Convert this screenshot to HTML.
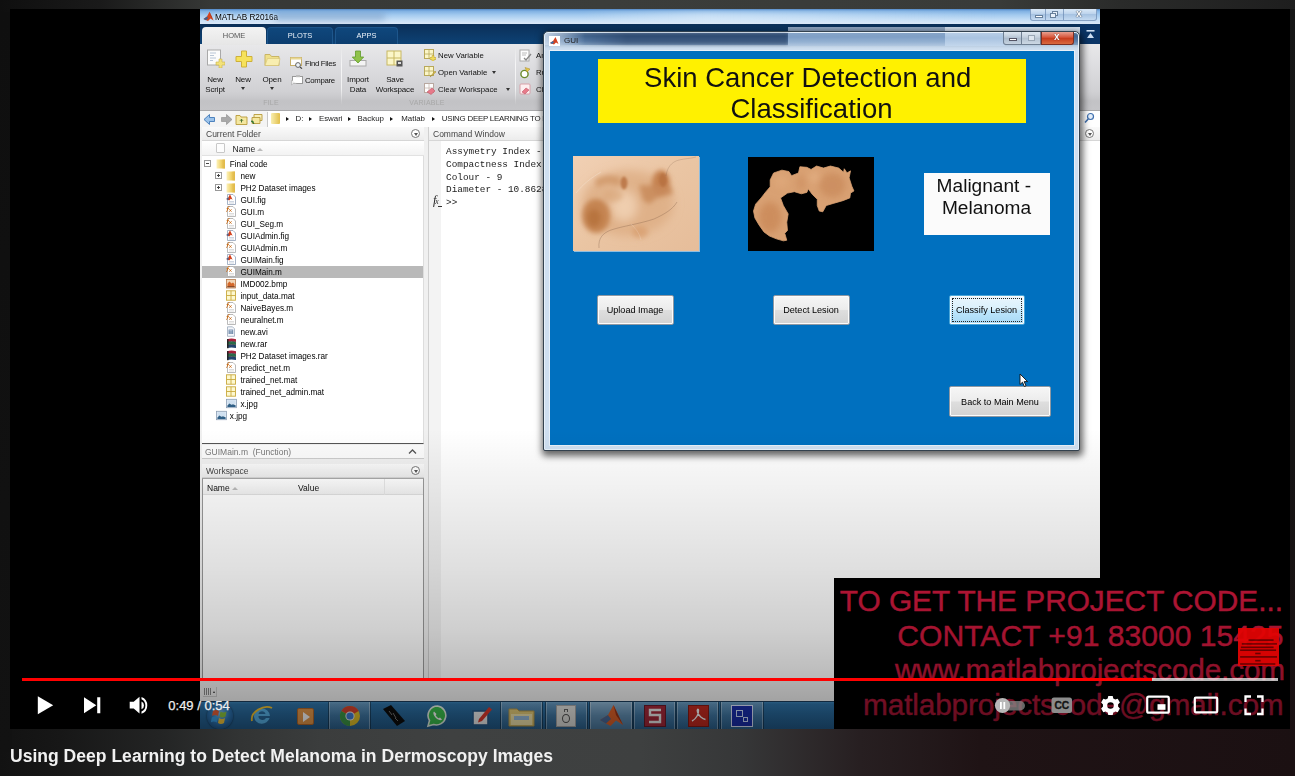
<!DOCTYPE html>
<html>
<head>
<meta charset="utf-8">
<title>Using Deep Learning to Detect Melanoma in Dermoscopy Images</title>
<style>
*{box-sizing:border-box;margin:0;padding:0}
html,body{width:1295px;height:776px;overflow:hidden;background:#161616;font-family:"Liberation Sans",sans-serif;}
#page{position:absolute;left:0;top:0;width:1295px;height:776px;overflow:hidden;
 background:linear-gradient(to right,#121212 0,#171717 60px,#232424 160px,#323434 240px,#3b3d3d 320px,#3f4141 450px,#3e4040 640px,#363738 740px,#271f21 860px,#1f1315 980px,#1b1012 1295px);
}
.abs{position:absolute}
#video{position:absolute;left:10px;top:9px;width:1280px;height:720px;background:#000;overflow:hidden}
#screen{position:absolute;left:190px;top:0;width:900px;height:720px;background:#fff;overflow:hidden;font-size:8px;color:#222;filter:blur(.3px)}
/* everything inside #screen uses coords relative to (200,9) */
#mtitle{left:0;top:0;width:900px;height:15px;background:linear-gradient(to bottom,#4f86c6 0,#7fb0e2 2px,#a3caef 6px,#c6dff6 11px,#dce9f8 15px)}
#mtabs{left:0;top:15px;width:900px;height:20px;background:linear-gradient(to bottom,#0b2f57 0,#0d4275 100%)}
#mtool{left:0;top:35px;width:900px;height:66px;background:linear-gradient(to bottom,#e8e8ea 0,#dcdcdf 25px,#d0d0d3 48px,#c8c8cb 54px,#c2c2c5 57px,#c5c5c8 66px)}
#maddr{left:0;top:101px;width:900px;height:17px;background:#f4f4f4;border-top:1px solid #a9a9ab}

.phead{background:linear-gradient(#fafafa,#ececec);border-bottom:1px solid #d6d6d6;color:#444;font-size:8.5px}
.dd{position:absolute;width:9px;height:9px;border:1px solid #777;border-radius:50%;background:#fff}
.dd:after{content:"";position:absolute;left:1.5px;top:2.5px;border:2px solid transparent;border-bottom:0;border-top:3px solid #555}
#flist .row{position:absolute;left:2px;width:221px;height:12px;font-size:8.200px;color:#000}
#flist .row.sel{background:#b9b9b9}
#flist .row span{position:absolute;top:2px;white-space:nowrap}
#flist i{position:absolute;display:block}
.exp{top:2.200px;width:7px;height:7px;border:1px solid #999;background:#fff}
.exp:before{content:"";position:absolute;left:1px;top:2px;width:3px;height:1px;background:#444}
.exp.plus:after{content:"";position:absolute;left:2px;top:1px;width:1px;height:3px;background:#444}
#flist svg.ic{position:absolute;top:-.300px;overflow:visible}
.mono{font-family:"Liberation Mono",monospace;font-size:9.400px;line-height:12.650px;color:#222;white-space:nowrap}

.btn{background:linear-gradient(#f6f6f6 0,#ececec 48%,#dedede 52%,#d2d2d2 100%);border:1px solid #8e98a3;border-radius:2px;box-shadow:inset 0 0 0 1px #fbfbfb;font-size:9.100px;color:#000;text-align:center;line-height:28px;white-space:nowrap}
.btn.foc{background:linear-gradient(#eaf6fd 0,#d9f0fc 48%,#bee6fd 52%,#a7d9f5 100%);border-color:#49a6d8}
.btn.foc i{position:absolute;left:2px;top:2px;right:2px;bottom:2px;border:1px dotted #222}

.cap{position:absolute;border:1px solid rgba(110,140,180,.75);border-top:0;background:linear-gradient(#d9e8f7,#bcd3ec 45%,#a7c3e2 50%,#c4daf1)}
.tab{height:17px;background:linear-gradient(#0f477c,#0c3d6f);border:1px solid #1d568c;border-bottom:0;border-radius:4px 4px 0 0;text-align:center;font-size:7.500px;line-height:16px;color:#e8f0f8}
.tl{font-size:8px;line-height:10px;color:#111;letter-spacing:-.15px;text-align:center;white-space:nowrap}
.ts{font-size:7.800px;color:#111;white-space:nowrap}
.sec{font-size:7px;color:#a8a8a8;text-align:center;letter-spacing:.2px}
.car{display:inline-block;border:2.500px solid transparent;border-bottom:0;border-top:3px solid #333;vertical-align:2px}
.ra{display:inline-block;border:2.500px solid transparent;border-right:0;border-left:3.500px solid #111;margin:0 6px 0 5px;vertical-align:0}
.tb{height:27px;border:1px solid rgba(255,255,255,.35);border-top:0;border-bottom:0;background:linear-gradient(rgba(255,255,255,.28),rgba(255,255,255,.12) 50%,rgba(255,255,255,.05));box-shadow:-1px 0 0 rgba(0,0,0,.35),1px 0 0 rgba(0,0,0,.35)}

.rt{font-size:29.800px;line-height:34px;color:#cb183c;white-space:nowrap;-webkit-text-stroke:.45px #cb183c}

.ra2{position:absolute;top:107.500px;border:2.600px solid transparent;border-right:0;border-left:3.400px solid #111}
.ad2{position:absolute;top:105px;font-size:7.900px;color:#222;white-space:nowrap}
</style>
</head>
<body>

<svg width="0" height="0" style="position:absolute">
 <defs>
  <linearGradient id="gfold" x1="0" x2="1" y1="0" y2="0"><stop offset="0" stop-color="#fdf3bd"/><stop offset=".55" stop-color="#f0d26a"/><stop offset="1" stop-color="#ddb443"/></linearGradient>
  <symbol id="ic-folder" viewBox="0 0 10 11"><path d="M.5 1.500h8.500v9H.500z" fill="url(#gfold)"/><path d="M6.500 1.500h2.500v9h-2.500z" fill="#e3bd4e" opacity=".6"/></symbol>
  <symbol id="ic-fig" viewBox="0 0 10 11"><path d="M1.500 .5h5.500l2.500 2.500v7.500h-8z" fill="#fff" stroke="#8fa0b8" stroke-width=".8"/><path d="M3 7.500h5M3 9h5" stroke="#b9c4d4" stroke-width=".7"/><path d="M.3 5l2-1.400 1.700-3.400 2.600 5.600-1.800-1-1.600 1.600z" fill="#d4401c"/><path d="M.3 5l2-1.400.8 1.100-1.400 1.200z" fill="#4a6a9a"/></symbol>
  <symbol id="ic-m" viewBox="0 0 10 11"><path d="M1.500 .5h5.500l2.500 2.500v7.500h-8z" fill="#fff" stroke="#a8a8a8" stroke-width=".8"/><path d="M3 7.500h5M3 9h5" stroke="#d0d0d0" stroke-width=".7"/><path d="M.2 5.500c.8 0 1-.4 1.200-1.500l.5-2.300c.2-1 .7-1.400 1.600-1.200" fill="none" stroke="#c86a14" stroke-width=".9"/><path d="M.6 2.600h2.400M3.200 3.200l2.400 2.600M5.600 3.200l-2.400 2.600" stroke="#c86a14" stroke-width=".8"/></symbol>
  <symbol id="ic-mat" viewBox="0 0 10 11"><rect x=".5" y=".8" width="9" height="9.400" fill="#fdf8cf" stroke="#c9a93e" stroke-width=".9"/><path d="M5 .8v9.400M.5 5.500h9" stroke="#c9a93e" stroke-width=".9"/></symbol>
  <symbol id="ic-bmp" viewBox="0 0 10 11"><rect x=".5" y="1.500" width="9" height="8.500" fill="#f1d6b8" stroke="#b5784a" stroke-width=".8"/><path d="M1.500 5.500l2-2 2 2 1.500-1 1.500 1.500v2.500h-7z" fill="#d4682a"/><rect x="1.300" y="8" width="7.400" height="1.300" fill="#8a4a2a"/></symbol>
  <symbol id="ic-avi" viewBox="0 0 10 11"><path d="M1.500 .8h5l2 2v7.500h-7z" fill="#f4f6fa" stroke="#9aa8ba" stroke-width=".8"/><rect x="2.600" y="3.600" width="4.600" height="4.400" fill="#5f7da0"/><path d="M3.300 4.500h3.200M3.300 5.800h3.200M3.300 7.100h3.200" stroke="#dfe8f2" stroke-width=".6"/></symbol>
  <symbol id="ic-rar" viewBox="0 0 11 11"><path d="M1 1.200q4.500-1.200 9 0v2.600q-4.500-1.200-9 0z" fill="#a8203a"/><path d="M1 4.200q4.500-1.200 9 0v2.600q-4.500-1.200-9 0z" fill="#2a6e4a"/><path d="M1 7.200q4.500-1.200 9 0v2.800q-4.500-1.200-9 0z" fill="#23456e"/><path d="M1.800 1v9.200" stroke="#222" stroke-width="1.400"/><path d="M1 3.900q4.500-1.200 9 0M1 6.900q4.500-1.200 9 0" stroke="#111" stroke-width=".5" fill="none"/></symbol>
  <symbol id="ic-jpg" viewBox="0 0 11 11"><rect x=".5" y="1.300" width="10" height="8.400" fill="#e8f0f8" stroke="#8a9db3" stroke-width=".8"/><rect x="1.400" y="2.200" width="8.200" height="4" fill="#cfe0f0"/><path d="M1.400 7.600l2-2.200 2 1.400 1.600-.6 2.600 1v1.700H1.400z" fill="#2f5f86"/></symbol>
 </defs>
</svg>
<div id="page">
 <div class="abs" style="left:0;top:0;width:1295px;height:12px;background:linear-gradient(to right,#0f0f0f 0,#1a1a1a 100px,#363836 210px,#3b3d3b 600px,#393b39 1000px,#2a2b2a 1120px,#1e1e1e 1295px)"></div>
 <div class="abs" style="left:0;top:12px;width:12px;height:740px;background:linear-gradient(#0f0f0f,#121212)"></div>
 <div class="abs" style="left:1288px;top:9px;width:7px;height:740px;background:linear-gradient(#161616,#151313 60%,#1b1012)"></div>
 <div id="video">
  <div id="screen">
   <div class="abs" id="mtitle"></div>
   <div class="abs" id="mtabs"></div>
   <div class="abs" id="mtool"></div>
   <div class="abs" id="maddr"></div>

   <!-- Current Folder panel -->
   <div class="abs" style="left:0;top:118px;width:900px;height:566px;background:#f0f0f0"></div>
   <div class="abs phead" style="left:2px;top:118px;width:222px;height:14px"><span class="abs" style="left:4px;top:2px">Current Folder</span><i class="dd" style="left:209px;top:2px"></i></div>
   <div class="abs" style="left:2px;top:132px;width:222px;height:303px;background:#fff;border-bottom:1px solid #555;border-right:1px solid #ddd"></div>
   <div class="abs" style="left:2px;top:132px;width:222px;height:15px;background:linear-gradient(#fff,#f3f3f3);border-bottom:1px solid #e2e2e2"><i class="abs" style="left:14px;top:2px;width:9px;height:10px;border:1px solid #c8c8c8;background:#fdfdfd;border-radius:1px"></i><span class="abs" style="left:30.500px;top:2.500px;color:#222;font-size:8.500px">Name</span><i class="abs" style="left:54.500px;top:7px;border:3px solid transparent;border-top:0;border-bottom:3px solid #bbb"></i></div>
   <div class="abs" id="flist" style="left:0;top:0;width:224px;height:440px">
<div class="row" style="top:149px"><i class="exp minus" style="left:2px"></i><svg class="ic" style="left:14px" width="10" height="11"><use href="#ic-folder"/></svg><span style="left:27.800px">Final code</span></div>
<div class="row" style="top:161px"><i class="exp plus" style="left:13px"></i><svg class="ic" style="left:24.200px" width="10" height="11"><use href="#ic-folder"/></svg><span style="left:38.400px">new</span></div>
<div class="row" style="top:173px"><i class="exp plus" style="left:13px"></i><svg class="ic" style="left:24.200px" width="10" height="11"><use href="#ic-folder"/></svg><span style="left:38.400px">PH2 Dataset images</span></div>
<div class="row" style="top:185px"><svg class="ic" style="left:24.200px" width="10" height="11"><use href="#ic-fig"/></svg><span style="left:38.400px">GUI.fig</span></div>
<div class="row" style="top:197px"><svg class="ic" style="left:24.200px" width="10" height="11"><use href="#ic-m"/></svg><span style="left:38.400px">GUI.m</span></div>
<div class="row" style="top:209px"><svg class="ic" style="left:24.200px" width="10" height="11"><use href="#ic-m"/></svg><span style="left:38.400px">GUI_Seg.m</span></div>
<div class="row" style="top:221px"><svg class="ic" style="left:24.200px" width="10" height="11"><use href="#ic-fig"/></svg><span style="left:38.400px">GUIAdmin.fig</span></div>
<div class="row" style="top:233px"><svg class="ic" style="left:24.200px" width="10" height="11"><use href="#ic-m"/></svg><span style="left:38.400px">GUIAdmin.m</span></div>
<div class="row" style="top:245px"><svg class="ic" style="left:24.200px" width="10" height="11"><use href="#ic-fig"/></svg><span style="left:38.400px">GUIMain.fig</span></div>
<div class="row sel" style="top:257px"><svg class="ic" style="left:24.200px" width="10" height="11"><use href="#ic-m"/></svg><span style="left:38.400px">GUIMain.m</span></div>
<div class="row" style="top:269px"><svg class="ic" style="left:24.200px" width="10" height="11"><use href="#ic-bmp"/></svg><span style="left:38.400px">IMD002.bmp</span></div>
<div class="row" style="top:281px"><svg class="ic" style="left:24.200px" width="10" height="11"><use href="#ic-mat"/></svg><span style="left:38.400px">input_data.mat</span></div>
<div class="row" style="top:293px"><svg class="ic" style="left:24.200px" width="10" height="11"><use href="#ic-m"/></svg><span style="left:38.400px">NaiveBayes.m</span></div>
<div class="row" style="top:305px"><svg class="ic" style="left:24.200px" width="10" height="11"><use href="#ic-m"/></svg><span style="left:38.400px">neuralnet.m</span></div>
<div class="row" style="top:317px"><svg class="ic" style="left:24.200px" width="10" height="11"><use href="#ic-avi"/></svg><span style="left:38.400px">new.avi</span></div>
<div class="row" style="top:329px"><svg class="ic" style="left:24.200px" width="11" height="11"><use href="#ic-rar"/></svg><span style="left:38.400px">new.rar</span></div>
<div class="row" style="top:341px"><svg class="ic" style="left:24.200px" width="11" height="11"><use href="#ic-rar"/></svg><span style="left:38.400px">PH2 Dataset images.rar</span></div>
<div class="row" style="top:353px"><svg class="ic" style="left:24.200px" width="10" height="11"><use href="#ic-m"/></svg><span style="left:38.400px">predict_net.m</span></div>
<div class="row" style="top:365px"><svg class="ic" style="left:24.200px" width="10" height="11"><use href="#ic-mat"/></svg><span style="left:38.400px">trained_net.mat</span></div>
<div class="row" style="top:377px"><svg class="ic" style="left:24.200px" width="10" height="11"><use href="#ic-mat"/></svg><span style="left:38.400px">trained_net_admin.mat</span></div>
<div class="row" style="top:389px"><svg class="ic" style="left:24.200px" width="11" height="11"><use href="#ic-jpg"/></svg><span style="left:38.400px">x.jpg</span></div>
<div class="row" style="top:401px"><svg class="ic" style="left:14px" width="11" height="11"><use href="#ic-jpg"/></svg><span style="left:27.800px">x.jpg</span></div>
   </div>
   <div class="abs" style="left:2px;top:436px;width:222px;height:14px;background:#fbfbfb;border-bottom:1px solid #ccc"><span class="abs" style="left:3px;top:2px;color:#777;font-size:8.500px">GUIMain.m&nbsp; (Function)</span><svg class="abs" style="left:206px;top:3px" width="9" height="7" viewBox="0 0 9 7"><path d="M1 5.5 L4.5 2 L8 5.5" fill="none" stroke="#555" stroke-width="1.3"/></svg></div>
   <div class="abs phead" style="left:2px;top:455px;width:222px;height:14px"><span class="abs" style="left:4px;top:2px">Workspace</span><i class="dd" style="left:209px;top:2px"></i></div>
   <div class="abs" style="left:2px;top:469px;width:222px;height:202px;background:#fff;border:1px solid #999;border-top-color:#aaa"></div>
   <div class="abs" style="left:3px;top:470px;width:220px;height:16px;background:linear-gradient(#fff,#f1f1f1);border-bottom:1px solid #e0e0e0"><span class="abs" style="left:4px;top:3.500px;color:#111;font-size:8.500px">Name</span><i class="abs" style="left:29px;top:8px;border:3px solid transparent;border-top:0;border-bottom:3px solid #bbb"></i><span class="abs" style="left:95px;top:3.500px;color:#111;font-size:8.500px">Value</span><i class="abs" style="left:181px;top:0;width:1px;height:16px;background:#e6e6e6"></i></div>
   <!-- Command window -->
   <div class="abs" style="left:228px;top:118px;width:672px;height:553px;background:#fff;border-left:1px solid #d0d0d0"></div>
   <div class="abs" style="left:229px;top:132px;width:12px;height:539px;background:#f3f3f3"></div>
   <div class="abs phead" style="left:229px;top:118px;width:671px;height:14px"><span class="abs" style="left:4px;top:2px">Command Window</span></div>
   <div class="abs mono" style="left:246px;top:137.300px">Assymetry Index - 0.39<br>Compactness Index - 2.1<br>Colour - 9<br>Diameter - 10.8628</div>
   <div class="abs mono" style="left:246px;top:188.300px">&gt;&gt;</div>
   <div class="abs" style="left:233px;top:184px;font-family:'Liberation Serif',serif;font-style:italic;font-size:12px;color:#222">f<span style="font-size:7.500px;margin-left:-1px">x</span></div><i class="abs" style="left:238px;top:197px;width:4px;height:1px;background:#333"></i>

   <!-- MATLAB title bar content -->
   <svg class="abs" style="left:3px;top:2px" width="11" height="11" viewBox="0 0 11 11"><path d="M0.5 8 L4 5.5 L6.5 0.8 L10.5 9.5 L7.5 7.5 L5 10 Z" fill="#d4451f"/><path d="M0.5 8 L4 5.5 L5.2 7.2 L3 9.2 Z" fill="#44618f"/><path d="M6.5 0.8 L7.8 5 L10.5 9.5 Z" fill="#8a2a14"/></svg>
   <span class="abs" style="left:15px;top:3.800px;font-size:8.200px;color:#000;text-shadow:0 0 3px #fff">MATLAB R2016a</span>
   <div class="abs" style="left:75px;top:3px;width:110px;height:9px;background:rgba(120,150,190,.45);filter:blur(3px)"></div>
   <div class="abs" style="left:380px;top:2px;width:420px;height:10px;background:linear-gradient(to right,rgba(255,255,255,0),rgba(255,255,255,.35) 30%,rgba(255,255,255,.15) 70%,rgba(255,255,255,0));filter:blur(2px)"></div>
   <div class="abs cap" style="left:830px;top:0;width:16px;height:12px;border-radius:0 0 0 3px"><i class="abs" style="left:4px;top:6px;width:8px;height:3px;background:#fff;border:1px solid #67809c"></i></div>
   <div class="abs cap" style="left:846px;top:0;width:18px;height:12px;border-left:0"><i class="abs" style="left:6px;top:2px;width:6px;height:5px;border:1px solid #67809c;background:#e8f1fa"></i><i class="abs" style="left:4px;top:4px;width:6px;height:5px;border:1px solid #67809c;background:#e8f1fa"></i></div>
   <div class="abs cap" style="left:864px;top:0;width:33px;height:12px;border-left:0;border-radius:0 0 3px 0"><span class="abs" style="left:12px;top:-2px;font-size:10.5px;font-weight:bold;color:#fff;text-shadow:0 0 1px #234,0 0 1px #234">x</span></div>
   <!-- tabs -->
   <div class="abs" style="left:2px;top:18px;width:64px;height:18px;background:linear-gradient(#f3f3f3,#e6e6e6);border-radius:4px 4px 0 0;text-align:center;font-size:7.5px;line-height:17px;color:#555">HOME</div>
   <div class="abs tab" style="left:67px;top:18px;width:66px">PLOTS</div>
   <div class="abs tab" style="left:135px;top:18px;width:63px">APPS</div>
   <div class="abs" style="left:588px;top:18px;width:157px;height:10px;background:#8da3bf"></div><div class="abs" style="left:745px;top:17.500px;width:136px;height:12px;background:#d3dfee"></div>
   <div class="abs" style="left:880px;top:15px;width:20px;height:20px;background:#0b3566"></div>
   <svg class="abs" style="left:886px;top:21px" width="9" height="9" viewBox="0 0 9 9"><rect x="0.5" y="0" width="8" height="1.6" fill="#cfe0f2"/><path d="M1 8 L4.5 3 L8 8 Z" fill="#cfe0f2"/></svg>

   <!-- toolstrip -->
   <div class="abs tl" style="left:0px;top:65.500px;width:30px">New<br>Script</div>
   <div class="abs tl" style="left:28px;top:65.500px;width:30px">New<br><b class="car"></b></div>
   <div class="abs tl" style="left:57px;top:65.500px;width:30px">Open<br><b class="car"></b></div>
   <div class="abs tl" style="left:143px;top:65.500px;width:30px">Import<br>Data</div>
   <div class="abs tl" style="left:170px;top:65.500px;width:50px">Save<br>Workspace</div>
   <div class="abs ts" style="left:105px;top:50px;letter-spacing:-.3px">Find Files</div>
   <div class="abs ts" style="left:105px;top:66.5px;letter-spacing:-.35px">Compare</div>
   <div class="abs ts" style="left:238px;top:42px">New Variable</div>
   <div class="abs ts" style="left:238px;top:58.5px">Open Variable&nbsp; <b class="car" style="vertical-align:1px"></b></div>
   <div class="abs ts" style="left:238px;top:75.5px">Clear Workspace&nbsp;&nbsp;&nbsp; <b class="car" style="vertical-align:1px"></b></div>
   <div class="abs ts" style="left:336px;top:42px">An</div>
   <div class="abs ts" style="left:336px;top:58.5px">Ru</div>
   <div class="abs ts" style="left:336px;top:75.5px">Cl</div>
   <div class="abs sec" style="left:56px;top:90px;width:30px">FILE</div>
   <div class="abs sec" style="left:207px;top:90px;width:40px">VARIABLE</div>
   <i class="abs" style="left:141px;top:38px;width:1px;height:58px;background:linear-gradient(rgba(255,255,255,0),rgba(255,255,255,.7) 30%,rgba(255,255,255,.7) 70%,rgba(255,255,255,0))"></i>
   <i class="abs" style="left:315px;top:38px;width:1px;height:58px;background:linear-gradient(rgba(255,255,255,0),rgba(255,255,255,.7) 30%,rgba(255,255,255,.7) 70%,rgba(255,255,255,0))"></i>
   <!-- toolstrip icons -->
   <svg class="abs" style="left:6px;top:40px" width="19" height="19" viewBox="0 0 19 19"><rect x="1.5" y="1" width="13" height="15" fill="#fbfbfb" stroke="#a9a9a9"/><path d="M4 4h6M4 6.5h4M4 9h6M4 11.5h3" stroke="#b9c6d6" stroke-width="1"/><path d="M13 10v3h-3v3h3v3h3v-3h3v-3h-3v-3z" fill="#f2e27a" stroke="#c9b24a" stroke-width=".6"/></svg>
   <svg class="abs" style="left:35px;top:41px" width="18" height="18" viewBox="0 0 18 18"><path d="M6.5 1h5v5.5h5.5v5h-5.5v5.5h-5v-5.5H1v-5h5.5z" fill="#f6e25a" stroke="#cdb03a" stroke-width="1"/></svg>
   <svg class="abs" style="left:64px;top:44px" width="17" height="14" viewBox="0 0 17 14"><path d="M1 1.5h5l1.5 2H15v9H1z" fill="#efe08a" stroke="#c9b566" stroke-width="1"/><path d="M3.5 5.5H16l-1.5 7H1z" fill="#f8eeb0" stroke="#d5c376" stroke-width=".6"/></svg>
   <svg class="abs" style="left:90px;top:48px" width="13" height="12" viewBox="0 0 13 12"><rect x=".5" y=".5" width="11" height="8" fill="#fdfdfd" stroke="#c4ad6a"/><rect x=".5" y=".5" width="11" height="2" fill="#e8d792"/><circle cx="8" cy="8" r="2.4" fill="#eef4fb" stroke="#555" stroke-width=".9"/><path d="M10 10l2 1.6" stroke="#444" stroke-width="1.2"/></svg>
   <svg class="abs" style="left:91px;top:65px" width="12" height="12" viewBox="0 0 12 12"><rect x="1.5" y="2.5" width="10" height="7" fill="#fff" stroke="#999"/><rect x="5" y="1" width="4" height="2.2" fill="#bbb"/><path d="M.5 6v5l2-1.6h3" fill="#eee" stroke="#aaa" stroke-width=".6"/></svg>
   <svg class="abs" style="left:149px;top:41px" width="18" height="17" viewBox="0 0 18 17"><rect x="1" y="10.5" width="16" height="5.5" fill="#f4f4f4" stroke="#aaa"/><path d="M6.5 1h5v6h3.2L9 13 3.300 7H6.500z" fill="#8fc24a" stroke="#5f9a2a" stroke-width=".8"/></svg>
   <svg class="abs" style="left:186px;top:41px" width="17" height="17" viewBox="0 0 17 17"><rect x="1" y="1" width="14" height="14" fill="#fbf6c8" stroke="#c8b863"/><path d="M8 1v14M1 8h14" stroke="#c8b863"/><rect x="10.5" y="10.500" width="6" height="6" fill="#555"/><rect x="12" y="12" width="3" height="2" fill="#ddd"/></svg>
   <svg class="abs" style="left:224px;top:40px" width="12" height="12" viewBox="0 0 12 12"><rect x=".5" y=".5" width="9" height="9" fill="#fbf6c8" stroke="#b8a85a"/><path d="M5 .5v9M.5 5h9" stroke="#b8a85a" stroke-width=".8"/><path d="M8 6.500v2h-2v2h2v2h2v-2h2v-2h-2v-2z" fill="#f0dc5a" stroke="#b89a2a" stroke-width=".5"/></svg>
   <svg class="abs" style="left:224px;top:57px" width="12" height="12" viewBox="0 0 12 12"><rect x=".5" y=".5" width="9" height="9" fill="#fbf6c8" stroke="#b8a85a"/><path d="M5 .5v9M.5 5h9" stroke="#b8a85a" stroke-width=".8"/><path d="M6 11l5-6 1 1z" fill="#e6c84a" stroke="#9a8230" stroke-width=".5"/></svg>
   <svg class="abs" style="left:224px;top:74px" width="12" height="12" viewBox="0 0 12 12"><rect x=".5" y=".5" width="9" height="9" fill="#fdfdfd" stroke="#b8a8a0"/><path d="M5 .5v9M.5 5h9" stroke="#c8b8b0" stroke-width=".8"/><path d="M3 9l5-4 3 3-4 3.500z" fill="#e77a8a" stroke="#b84a5a" stroke-width=".5"/></svg>
   <svg class="abs" style="left:319px;top:40px" width="13" height="13" viewBox="0 0 13 13"><rect x="1" y="1" width="9" height="11" fill="#fdfdfd" stroke="#aaa"/><path d="M3 4h5M3 6h4" stroke="#bbb"/><path d="M5 9l2 2 5-6" fill="none" stroke="#888" stroke-width="1.3"/></svg>
   <svg class="abs" style="left:319px;top:57px" width="13" height="13" viewBox="0 0 13 13"><circle cx="5.500" cy="8" r="3.600" fill="#fff" stroke="#6a8a2a" stroke-width="1.4"/><path d="M6 1.500l5 1.500-3 3z" fill="#e4c74a" stroke="#a88a2a" stroke-width=".5"/></svg>
   <svg class="abs" style="left:319px;top:74px" width="13" height="13" viewBox="0 0 13 13"><rect x="1" y="1" width="10" height="10" rx="1" fill="#fdeef0" stroke="#d8a0a8"/><path d="M3 9l4-4 3 2-4 4z" fill="#e77a8a" stroke="#b84a5a" stroke-width=".5"/></svg>

   <!-- address bar -->
   <svg class="abs" style="left:3px;top:104px" width="64" height="13" viewBox="0 0 64 13"><path d="M1 6.500L6.500 1.500v3h5v4h-5v3z" fill="#9cc3ea" stroke="#3f78b8" stroke-width=".9"/><path d="M29 6.500L23.500 1.500v3h-5v4h5v3z" fill="#a9a9a9" stroke="#8a8a8a" stroke-width=".6"/><path d="M33 2.500h4l1 1.500h6v7.500H33z" fill="#f4e7a0" stroke="#b89a3a" stroke-width=".9"/><path d="M38.500 9.500v-3M37 7.800l1.500-1.600L40 7.800" fill="none" stroke="#3a6a2a" stroke-width=".9"/><path d="M51 1.500h8v6h-8z" fill="#f8efb8" stroke="#b89a3a" stroke-width=".9"/><path d="M49 4.500h8v6h-8z" fill="#f4e7a0" stroke="#b89a3a" stroke-width=".9"/><path d="M48 8l3 3-1-3z" fill="#3a8a3a" stroke="#2a6a2a" stroke-width=".6"/></svg>
   <i class="abs" style="left:67px;top:103px;width:1px;height:15px;background:#c8c8c8"></i>
   <div class="abs" style="left:68px;top:102px;width:832px;height:16px;background:#fff"></div>
   <i class="abs" style="left:71px;top:104px;width:9px;height:11px;background:linear-gradient(to right,#f8eeb0,#e2bf4a);border-radius:1px"></i>
   <div class="abs" id="addr" style="left:0;top:0;width:900px;height:0"><b class="ra2" style="left:85.5px"></b><span class="ad2" style="left:95.5px;">D:</span><b class="ra2" style="left:108.8px"></b><span class="ad2" style="left:118.9px;">Eswari</span><b class="ra2" style="left:147.5px"></b><span class="ad2" style="left:157.6px;">Backup</span><b class="ra2" style="left:190.2px"></b><span class="ad2" style="left:201.3px;">Matlab</span><b class="ra2" style="left:232.0px"></b><span class="ad2" style="left:241.7px;;letter-spacing:-.24px">USING DEEP LEARNING TO DETECT</span></div>
   <svg class="abs" style="left:884px;top:103px" width="11" height="12" viewBox="0 0 11 12"><circle cx="6.500" cy="4.500" r="3" fill="#e6f0fb" stroke="#3f6fae" stroke-width="1.2"/><path d="M4.200 7L1 10.500" stroke="#3f6fae" stroke-width="1.600"/></svg>
   <i class="dd" style="left:885px;top:120px"></i>
   <!--PANELS-->

   <!-- GUI window : coords relative to screen (200,9) -->
   <div class="abs" id="gui" style="left:343px;top:22px;width:537px;height:420px">
    <div class="abs" style="left:0;top:0;width:537px;height:420px;border-radius:5px 5px 2px 2px;background:#cfdff0;border:1px solid #34424f;box-shadow:1px 3px 7px 2px rgba(0,0,0,.6),inset 0 0 0 1px rgba(235,244,252,.85)"></div>
    <div class="abs" style="left:2px;top:2px;width:533px;height:13px;border-radius:3px 3px 0 0;background:linear-gradient(to bottom,#5b7699 0,#456892 3px,#5b7ea8 8px,#86a3c3 12px,#a4bad2 13px)"></div>
    <div class="abs" style="left:2px;top:14px;width:533px;height:6px;background:linear-gradient(to bottom,#b4c8dc 0,#cadbed 3px,#d2e1f1 6px)"></div>
    <div class="abs" style="left:30px;top:2px;width:215px;height:12px;background:linear-gradient(to right,rgba(15,35,70,0),rgba(15,35,70,.4) 25%,rgba(15,35,70,.4) 100%);filter:blur(1.500px)"></div>
    <div class="abs" style="left:2px;top:2px;width:40px;height:12px;background:linear-gradient(to right,rgba(220,232,245,.8),rgba(220,232,245,0));"></div>
    <div class="abs" style="left:245px;top:2px;width:157px;height:13px;background:linear-gradient(to bottom,#86a4c8 0,#7f9fc6 4px,#94b1d2 9px,#b2c8e0 13px)"></div>
    <div class="abs" style="left:402px;top:2px;width:60px;height:13px;background:linear-gradient(to bottom,#b7cde6,#a9c3e0 5px,#c3d7ec 13px)"></div>
    <svg class="abs" style="left:6px;top:5px" width="11" height="10" viewBox="0 0 11 10"><rect width="11" height="10" fill="#fff"/><path d="M1 7 L4 5 L6.5 1 L9.5 8 L7 6.5 L5 8.5 Z" fill="#d2401f"/><path d="M1 7 L4 5 L5 6.5 L3 8 Z" fill="#3b6ea8"/></svg>
    <span class="abs" style="left:21px;top:5px;font-size:8px;color:#222">GUI</span>
    <!-- caption buttons -->
    <div class="abs" style="left:460px;top:1px;width:19px;height:13px;border:1px solid #6f7f92;border-top:0;border-radius:0 0 0 3px;background:linear-gradient(#dfe8f1,#b9c7d6 45%,#a9b9ca 50%,#c6d3e0)"><i class="abs" style="left:5px;top:6px;width:8px;height:3px;background:#fff;border:1px solid #556"></i></div>
    <div class="abs" style="left:479px;top:1px;width:19px;height:13px;border:1px solid #6f7f92;border-top:0;border-left:0;background:linear-gradient(#dfe8f1,#c3cfdc 45%,#b4c2d1 50%,#ccd8e4)"><i class="abs" style="left:6px;top:3px;width:7px;height:6px;border:1px solid #99a6b4;background:#dde5ee"></i></div>
    <div class="abs" style="left:498px;top:1px;width:33px;height:13px;border:1px solid #7a3024;border-top:0;border-radius:0 0 3px 0;background:linear-gradient(#e8a090,#d6553a 45%,#c63a1c 50%,#d96a40)"><span class="abs" style="left:12px;top:-1px;font-size:10px;font-weight:bold;color:#fff;text-shadow:0 0 1px #400">x</span></div>
    <!-- client -->
    <div class="abs" id="client" style="left:5.500px;top:18.500px;width:526.500px;height:396px;background:#0070bf;border:1px solid #e8f0f8;overflow:hidden">
     <div class="abs" style="left:48px;top:8px;width:428px;height:64px;background:#fff100;text-align:center;font-size:27.500px;line-height:31.500px;color:#111;padding-top:3px;white-space:pre">Skin Cancer Detection and <br>Classification</div>
     <!-- image 1 -->
     <div class="abs" id="img1" style="left:23px;top:105px;width:126px;height:95px;background:#e9c3a0;overflow:hidden;box-shadow:1px 1px 0 rgba(190,215,235,.75)">
      <svg class="abs" style="left:0;top:0" width="126" height="95" viewBox="0 0 126 95">
       <defs>
        <filter id="b6" x="-50%" y="-50%" width="200%" height="200%"><feGaussianBlur stdDeviation="5"/></filter>
        <filter id="b3" x="-50%" y="-50%" width="200%" height="200%"><feGaussianBlur stdDeviation="2.600"/></filter>
        <filter id="b15" x="-50%" y="-50%" width="200%" height="200%"><feGaussianBlur stdDeviation="1.300"/></filter>
        <linearGradient id="skinbg" x1="0" y1="0" x2="1" y2="1"><stop offset="0" stop-color="#f1d0b4"/><stop offset=".5" stop-color="#eac5a3"/><stop offset="1" stop-color="#e6bd9a"/></linearGradient>
       </defs>
       <rect width="126" height="95" fill="url(#skinbg)"/>
       <g filter="url(#b6)">
        <ellipse cx="55" cy="47" rx="46" ry="33" fill="#dcab82" opacity=".75"/>
        <ellipse cx="51" cy="50" rx="13" ry="15" fill="#efcfb0" opacity=".95"/>
       </g>
       <g filter="url(#b3)">
        <ellipse cx="23" cy="60" rx="14" ry="17" fill="#c27f4b" opacity=".9"/>
        <ellipse cx="21" cy="62" rx="7" ry="9" fill="#b4703c" opacity=".8"/>
        <path d="M22 24 Q34 16 48 22 L46 30 Q34 24 24 32 Z" fill="#cf9768" opacity=".8"/>
        <ellipse cx="88" cy="27" rx="9" ry="13" fill="#c27d4a" opacity=".92"/>
        <path d="M66 29 L98 30 L100 38 L84 42 L76 48 L70 44 Z" fill="#c88a5a" opacity=".85"/>
        <ellipse cx="67" cy="76" rx="8" ry="6" fill="#d79c6c" opacity=".7"/>
        <ellipse cx="40" cy="40" rx="10" ry="6" fill="#d9a67c" opacity=".6"/>
       </g>
       <g filter="url(#b15)">
        <ellipse cx="51" cy="27" rx="3.500" ry="6.500" fill="#ba7646" opacity=".9"/>
        <ellipse cx="90" cy="24" rx="4" ry="7" fill="#b46c3c" opacity=".7"/>
       </g>
       <path d="M26 92 C25 82 30 77 38 74 C50 70 66 68 81 63 C92 58 100 53 104 46" fill="none" stroke="#6a4a38" stroke-width=".55" opacity=".5"/>
       <path d="M93 20 C94 12 98 6 106 4 C112 2.500 118 2.500 123 1" fill="none" stroke="#7a5a48" stroke-width=".5" opacity=".45"/>
       <path d="M3 37 C10 28 18 22 28 16" fill="none" stroke="#fff" stroke-width=".6" opacity=".35"/>
       <path d="M58 68 C62 72 66 76 68 84" fill="none" stroke="#fff" stroke-width=".5" opacity=".3"/>
      </svg>
     </div>
     <!-- image 2 -->
     <div class="abs" id="img2" style="left:198px;top:106px;width:126.500px;height:94.500px;background:#000;overflow:hidden">
      <svg class="abs" style="left:0;top:0" width="126.500" height="94.500" viewBox="0 0 126 94" preserveAspectRatio="none">
       <defs><filter id="bl"><feGaussianBlur stdDeviation="3"/></filter><filter id="bl0"><feGaussianBlur stdDeviation=".45"/></filter><clipPath id="lc"><path d="M22.1 22.8 L25.5 15.9 L33.8 13.1 L40.7 14.5 L43.4 18.6 L50.3 15.9 L51.7 9.7 L58.6 10.3 L62.8 12.4 L68.3 9.0 L75.2 11.0 L82.1 9.0 L90.3 11.0 L95.2 15.2 L95.9 11.7 L98.6 15.9 L102.1 13.8 L100.7 20.7 L103.4 29.0 L105.5 33.8 L102.1 35.9 L101.4 40.7 L94.5 43.4 L84.8 46.2 L77.9 48.3 L74.5 54.5 L71.0 53.8 L69.0 48.3 L69.0 42.1 L64.1 37.2 L60.0 31.7 L58.6 35.2 L53.1 36.6 L46.2 34.5 L39.3 35.9 L32.4 40.7 L35.2 48.3 L40.0 56.6 L38.6 64.8 L39.3 73.1 L36.6 75.9 L38.6 82.8 L35.2 83.4 L28.3 81.4 L21.4 78.6 L15.9 74.5 L11.0 67.6 L6.9 60.7 L5.5 53.8 L7.6 46.9 L13.1 40.7 L17.9 34.5 L22.1 29.7 Z"/></clipPath></defs>
       <g filter="url(#bl0)"><path d="M22.1 22.8 L25.5 15.9 L33.8 13.1 L40.7 14.5 L43.4 18.6 L50.3 15.9 L51.7 9.7 L58.6 10.3 L62.8 12.4 L68.3 9.0 L75.2 11.0 L82.1 9.0 L90.3 11.0 L95.2 15.2 L95.9 11.7 L98.6 15.9 L102.1 13.8 L100.7 20.7 L103.4 29.0 L105.5 33.8 L102.1 35.9 L101.4 40.7 L94.5 43.4 L84.8 46.2 L77.9 48.3 L74.5 54.5 L71.0 53.8 L69.0 48.3 L69.0 42.1 L64.1 37.2 L60.0 31.7 L58.6 35.2 L53.1 36.6 L46.2 34.5 L39.3 35.9 L32.4 40.7 L35.2 48.3 L40.0 56.6 L38.6 64.8 L39.3 73.1 L36.6 75.9 L38.6 82.8 L35.2 83.4 L28.3 81.4 L21.4 78.6 L15.9 74.5 L11.0 67.6 L6.9 60.7 L5.5 53.8 L7.6 46.9 L13.1 40.7 L17.9 34.5 L22.1 29.7 Z" fill="#d9a173" stroke="#d9a173" stroke-width=".8" stroke-linejoin="round"/></g>
       <g clip-path="url(#lc)"><g filter="url(#bl)" opacity=".75"><ellipse cx="22" cy="60" rx="11" ry="15" fill="#c98757"/><ellipse cx="84" cy="28" rx="13" ry="12" fill="#c98a5c"/><ellipse cx="53" cy="26" rx="5" ry="8" fill="#cf9263"/><ellipse cx="33" cy="24" rx="7" ry="7" fill="#dfa97c"/><ellipse cx="66" cy="20" rx="6" ry="6" fill="#e2ae82"/></g></g>
      </svg>
     </div>
     <!-- result box -->
     <div class="abs" style="left:374px;top:122px;width:126px;height:62px;background:#fbfbfb;text-align:center;font-size:19.100px;line-height:22.500px;color:#111;padding-top:2px;white-space:pre">Malignant - <br>Melanoma</div>
     <!-- buttons -->
     <div class="abs btn" style="left:47px;top:244px;width:77px;height:30px">Upload Image</div>
     <div class="abs btn" style="left:223px;top:244px;width:77px;height:30px">Detect Lesion</div>
     <div class="abs btn foc" style="left:399px;top:244px;width:76px;height:30px">Classify Lesion<i></i></div>
     <div class="abs btn" style="left:399px;top:335px;width:102px;height:31px;line-height:30px;padding-left:1px">Back to Main Menu</div>
     <!-- cursor -->
     <svg class="abs" style="left:469px;top:322px" width="10" height="15" viewBox="0 0 10 15"><path d="M1 1 L1 11.5 L3.5 9.2 L5.3 13.5 L7 12.8 L5.2 8.6 L8.6 8.6 Z" fill="#fff" stroke="#111" stroke-width=".9"/></svg>
    </div>
   </div>
   <!--GUI-->

   <!-- status bar + taskbar -->
   <div class="abs" style="left:0;top:671px;width:900px;height:21px;background:#f0f0f0;border-top:1px solid #d8d8d8"></div>
   <div class="abs" style="left:3px;top:678px;width:14px;height:10px;border:1px solid #ccc;border-left:0;border-top:0"><i class="abs" style="left:1px;top:1px;width:1px;height:7px;background:#888;box-shadow:2px 0 0 #888,4px 0 0 #888,6px 0 0 #888"></i><i class="abs" style="left:10px;top:4px;border:1.500px solid transparent;border-top:0;border-bottom:2px solid #333"></i></div>
   <div class="abs" id="taskbar" style="left:0;top:692px;width:900px;height:28px;background:linear-gradient(#3c86bb 0,#2f74a9 2px,#27679a 50%,#225c8c 100%);border-top:1px solid #1a3d5c"></div>
   <div class="abs tb" style="left:129px;top:693px;width:41px"></div>
   <div class="abs tb" style="left:301px;top:693px;width:41px"></div>
   <div class="abs tb" style="left:346px;top:693px;width:41px"></div>
   <div class="abs tb" style="left:390px;top:693px;width:42px;background:linear-gradient(rgba(255,255,255,.45),rgba(255,255,255,.28) 50%,rgba(255,255,255,.2))"></div>
   <div class="abs tb" style="left:434px;top:693px;width:41px"></div>
   <div class="abs tb" style="left:477px;top:693px;width:41px"></div>
   <div class="abs tb" style="left:521px;top:693px;width:42px"></div>
   <!-- icons -->
   <div class="abs" style="left:7px;top:694px;width:26px;height:26px;border-radius:50%;background:radial-gradient(circle at 50% 40%,#7fc0ee 0,#2e78b8 45%,#173f6a 100%);box-shadow:0 0 2px #0a2038"></div>
   <svg class="abs" style="left:11px;top:699px" width="18" height="17" viewBox="0 0 18 17"><path d="M2 3q3-2 6 0l-1 5q-3-2-6 0z" fill="#e8603a"/><path d="M9.500 3.500q3 2 6 0l-1 5q-3 2-6 0z" fill="#8cc63e"/><path d="M.8 9.500q3-2 6 0l-1 5q-3-2-6 0z" fill="#3aa0e8"/><path d="M8 10q3 2 6 0l-1 5q-3 2-6 0z" fill="#f8c83a"/></svg>
   <svg class="abs" style="left:50px;top:695px" width="24" height="24" viewBox="0 0 24 24"><path d="M4 13a8 8 0 0 1 16-1H8.500a4 3.500 0 0 0 7.500 2h3.600A8 8 0 0 1 4 13zm4.500-3h7a3.600 3.600 0 0 0-7 0z" fill="#58b4ea"/><path d="M2 17C0 8 14 0 22 4" fill="none" stroke="#f4c430" stroke-width="1.800"/></svg>
   <div class="abs" style="left:97px;top:699px;width:17px;height:17px;background:#e89a4a;border-radius:2px;border:1px solid #b86a2a"><i class="abs" style="left:5px;top:3px;border:5px solid transparent;border-right:0;border-left:7px solid #fff"></i></div>
   <svg class="abs" style="left:139px;top:696px" width="22" height="22" viewBox="0 0 22 22"><circle cx="11" cy="11" r="10" fill="#e6c42a"/><path d="M11 11L2.300 6A10 10 0 0 1 19.700 6z" fill="#d8432f"/><path d="M11 11L2.300 6A10 10 0 0 0 11 21z" fill="#3d9a48"/><circle cx="11" cy="11" r="4.600" fill="#eee"/><circle cx="11" cy="11" r="3.600" fill="#3f7fd8"/></svg>
   <svg class="abs" style="left:180px;top:694px" width="28" height="26" viewBox="0 0 28 26"><path d="M3 6l8-4 14 16-8 5z" fill="#0c0c0c"/><path d="M9 8l3 4M13 10l3 5M15 15l3 3" stroke="#777" stroke-width="1"/></svg>
   <svg class="abs" style="left:226px;top:695px" width="23" height="24" viewBox="0 0 23 24"><path d="M11.500 2a9.500 9.500 0 0 0-8 14.500L2 22l5.500-1.500A9.500 9.500 0 1 0 11.500 2z" fill="#3cc04e" stroke="#e8f4e8" stroke-width="1.600"/><path d="M8 7.500c-1.500 1.500 0 4.500 2 6.500s5 3 6 1.500l-2-2-1.300.8c-1-.4-2.600-2-3-3l.8-1.300z" fill="#fff"/></svg>
   <svg class="abs" style="left:270px;top:695px" width="24" height="24" viewBox="0 0 24 24"><rect x="3" y="7" width="15" height="14" fill="#f2f2f2" stroke="#2a5a8a" stroke-width="1.600"/><path d="M9 15L19 3l3 2.500L12 17l-4 1.500z" fill="#e0392b"/></svg>
   <svg class="abs" style="left:308px;top:697px" width="27" height="21" viewBox="0 0 27 21"><path d="M1 3h8l2 2h15v15H1z" fill="#e8cf7a" stroke="#b89a4a"/><rect x="3" y="8" width="21" height="11" fill="#f6e9b0"/><rect x="6" y="10" width="15" height="4" fill="#9cc0e0"/></svg>
   <div class="abs" style="left:356px;top:696px;width:20px;height:22px;background:#e4e4e0;border:1px solid #aaa"><i class="abs" style="left:5px;top:8px;width:8px;height:9px;border:1.500px solid #555;border-radius:50%"></i><i class="abs" style="left:7px;top:3px;width:4px;height:3px;border:1px solid #666;border-bottom:0"></i></div>
   <svg class="abs" style="left:399px;top:694px" width="25" height="25" viewBox="0 0 25 25"><path d="M1 17L9 12 14.500 2 24 22 17 17.500 11.500 23z" fill="#e0622a"/><path d="M1 17L9 12l3 4-5 4.500z" fill="#4a6a9a"/><path d="M14.500 2L17 12l7 10z" fill="#9a3418"/></svg>
   <div class="abs" style="left:444px;top:696px;width:22px;height:22px;background:#a8283a;border:1px solid #6a1a28"><svg width="20" height="20" viewBox="0 0 20 20"><path d="M16 4H5v5h10v7H4" fill="none" stroke="#eee" stroke-width="2.400"/></svg></div>
   <div class="abs" style="left:488px;top:696px;width:21px;height:22px;background:#c62a20;border:1px solid #8a1a14"><svg width="19" height="20" viewBox="0 0 19 20"><path d="M3 15c4-2 7-7 6.500-11-.3-1.500-1.800-.5-1 2 1 4 5 7 8 7.500" fill="none" stroke="#fff" stroke-width="1.400"/></svg></div>
   <div class="abs" style="left:531px;top:696px;width:22px;height:22px;background:#1a2fae;border:1px solid #dfe6ff"><i class="abs" style="left:4px;top:4px;width:7px;height:7px;border:1.500px solid #cfe0ff"></i><i class="abs" style="left:11px;top:11px;width:5px;height:5px;border:1.500px solid #cfe0ff"></i></div>
   <!--TASKBAR-->
  </div>

  <!-- black overlay box with red text; coords relative to video (10,9) -->
  <div class="abs" id="ov" style="left:824px;top:569px;width:456px;height:151px;background:#000;overflow:hidden">
   <div class="abs rt" style="right:7px;top:6px">TO GET THE PROJECT CODE...</div>
   <div class="abs rt" style="right:6.500px;top:40.500px;font-size:30.100px">CONTACT +91 83000 15425</div>
   <div class="abs rt" style="right:5px;top:75px;letter-spacing:-.16px;color:#bf1739;-webkit-text-stroke-color:#bf1739">www.matlabprojectscode.com</div>
   <div class="abs rt" style="right:6.500px;top:110.300px;letter-spacing:-.14px;color:#a81535;-webkit-text-stroke-color:#a81535">matlabprojectscode@gmail.com</div>
  </div>

  <!--OVERLAY-->

  <!-- youtube bottom gradient -->
  <div class="abs" style="left:0;top:420px;width:1280px;height:300px;background:linear-gradient(to bottom,rgba(0,0,0,0) 0,rgba(0,0,0,.04) 40px,rgba(0,0,0,.075) 80px,rgba(0,0,0,.125) 140px,rgba(0,0,0,.19) 200px,rgba(0,0,0,.27) 250px,rgba(0,0,0,.33) 275px,rgba(0,0,0,.42) 300px)"></div>
  <!-- red watermark square -->
  <div class="abs" style="left:1228px;top:619px;width:41px;height:38px;background:#e30404;opacity:.94"><svg class="abs" style="left:0;top:0" width="41" height="38" viewBox="0 0 41 38"><rect x="10.5" y="11.3" width="25.1" height="1.600" fill="#4a0000" opacity=".75"/><rect x="3.8" y="15.1" width="35.2" height="1.600" fill="#4a0000" opacity=".75"/><rect x="2.9" y="18.5" width="32.7" height="1.600" fill="#4a0000" opacity=".75"/><rect x="2.1" y="21.4" width="36.0" height="1.600" fill="#4a0000" opacity=".75"/><rect x="17.2" y="24.7" width="5.4" height="1.600" fill="#4a0000" opacity=".75"/><rect x="2.1" y="28.1" width="36.9" height="1.600" fill="#4a0000" opacity=".75"/><rect x="17.2" y="31.9" width="5.4" height="1.600" fill="#4a0000" opacity=".75"/><rect x="2.1" y="35.2" width="35.2" height="1.600" fill="#4a0000" opacity=".75"/></svg></div>
  <!-- progress -->
  <div class="abs" style="left:12px;top:668.600px;width:1256px;height:3.600px;background:rgba(255,255,255,.72)"></div>
  <div class="abs" style="left:12px;top:668.600px;width:1129.500px;height:3.600px;background:#f00"></div>
  <!-- controls -->
  <svg class="abs" style="left:0;top:680px" width="1280" height="36" viewBox="0 0 1280 36">
   <g fill="#fff">
    <path d="M27.800 7.300 L43.200 16.200 L27.800 25.200 Z"/>
    <path d="M74 8.300 L86.300 16.200 L74 24.200 Z M87.200 8.300 h3.100 v15.900 h-3.100 Z"/>
    <path d="M119.700 12.800 h4 l5.800 -5 v16.800 l-5.800 -5 h-4 Z"/>
    <path d="M131.500 8 a9 9 0 0 1 0 16.800 v-2.200 a6.900 6.900 0 0 0 0 -12.400 Z M131.500 12.500 a4.300 4.300 0 0 1 0 7.800 Z"/>
   </g>
   <text x="158.300" y="21" font-family="Liberation Sans, sans-serif" font-size="13" fill="#eee" stroke="#eee" stroke-width=".25">0:49 / 0:54</text>
   <!-- autoplay toggle -->
   <rect x="990" y="12" width="25" height="9.500" rx="4.750" fill="#8a8a8a" opacity=".75"/>
   <circle cx="992.500" cy="16.500" r="7.600" fill="#b8b8b8"/>
   <path d="M990 13 h1.800 v7 h-1.800 Z M993.400 13 h1.800 v7 h-1.800 Z" fill="#fff"/>
   <!-- cc -->
   <rect x="1041.500" y="8.500" width="20.500" height="15.500" rx="2.500" fill="#8c8c8c"/>
   <text x="1044.600" y="20" font-family="Liberation Sans, sans-serif" font-size="10.300" font-weight="bold" fill="#151515" stroke="#151515" stroke-width=".3" letter-spacing="-.4">CC</text>
   <!-- gear -->
   <g transform="translate(1100.500,16.500)" fill="#fff">
    <path d="M-2.200 -9.600 h4.400 l.6 2.600 a7 7 0 0 1 1.900 1.100 l2.500 -.8 2.200 3.800 -1.900 1.800 a7 7 0 0 1 0 2.200 l1.900 1.800 -2.200 3.800 -2.500 -.8 a7 7 0 0 1 -1.900 1.100 l-.6 2.600 h-4.400 l-.6 -2.600 a7 7 0 0 1 -1.900 -1.100 l-2.500 .8 -2.200 -3.800 1.900 -1.800 a7 7 0 0 1 0 -2.200 l-1.900 -1.800 2.200 -3.800 2.500 .8 a7 7 0 0 1 1.900 -1.100 Z M0 -3.300 a3.300 3.300 0 1 0 0 6.600 a3.300 3.300 0 1 0 0 -6.600 Z" fill-rule="evenodd"/>
   </g>
   <!-- miniplayer -->
   <rect x="1137.200" y="7.700" width="21.600" height="16" rx="1.500" fill="none" stroke="#fff" stroke-width="2.200"/>
   <rect x="1147.500" y="15.200" width="8" height="5.600" fill="#fff"/>
   <!-- theater -->
   <rect x="1184.800" y="8.700" width="22.400" height="14.600" rx="1" fill="none" stroke="#fff" stroke-width="2.200"/>
   <!-- fullscreen -->
   <path d="M1235.500 13 v-5.500 h5.500 M1247 7.500 h5.500 v5.500 M1252.500 19.500 v5.500 h-5.500 M1241 25 h-5.500 v-5.500" fill="none" stroke="#fff" stroke-width="2.300"/>
  </svg>
  <!--YTCONTROLS-->
 </div>

 <div class="abs" id="ttl" style="left:10.400px;top:744.900px;font-size:19.200px;font-weight:bold;color:#f1f1f1;white-space:nowrap;transform-origin:0 0;transform:scaleX(.9145)">Using Deep Learning to Detect Melanoma in Dermoscopy Images</div>
 <!--TITLE-->
</div>
</body>
</html>
